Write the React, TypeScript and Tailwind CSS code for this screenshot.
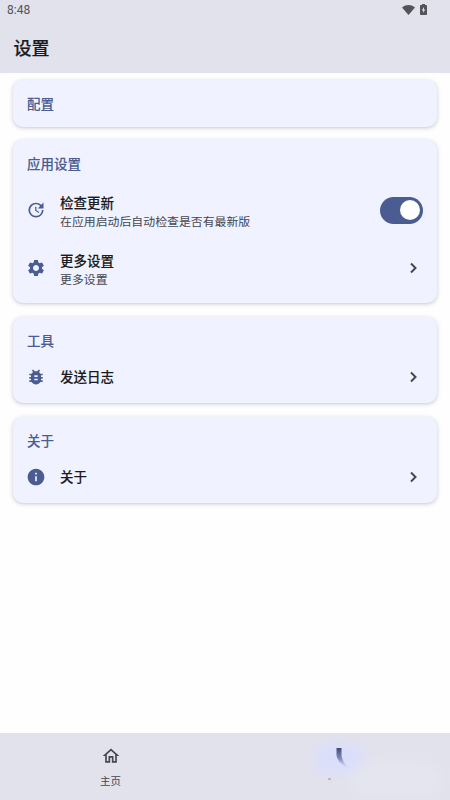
import type { ReactNode } from 'react';
import { MdBugReport, MdInfo, MdOutlineHome, MdSettings, MdUpdate } from 'react-icons/md';

type SectionProps = {
    title: string;
    className: string;
    children?: ReactNode;
};

const Section = ({ title, className, children }: SectionProps) => (
    <section className={`rounded-[10px] bg-[#f0f3ff] px-3.5 shadow-[0_1px_4px_1px_rgba(0,0,0,0.11),0_1px_2px_rgba(0,0,0,0.08)] ${className}`}>
        <h2 className="pt-[13px] text-[13.5px] leading-5 font-medium text-[#4a5c92] [-webkit-text-stroke:0.1px]">{title}</h2>
        {children}
    </section>
);

const Chevron = () => (
    <svg className="size-5" viewBox="0 0 20 20" fill="none" stroke="#45464f" strokeWidth="2">
        <path d="m8 5.500 4.500 4.500L8 14.500" />
    </svg>
);

type RowProps = {
    icon: ReactNode;
    title: string;
    subtitle?: string;
    className: string;
    action?: ReactNode;
};

const Row = ({ icon, title, subtitle, className, action }: RowProps) => (
    <div className={`flex items-center ${className}`}>
        <span className="-ml-[1px] w-[34px] text-[20px] text-[#4a5c92]">{icon}</span>
        <div className={subtitle ? 'flex-1 pt-[2px]' : 'flex-1 pb-[2px]'}>
            <div className="text-[13.5px] leading-5 font-medium text-[#1a1b21] [-webkit-text-stroke:0.12px]">{title}</div>
            {subtitle && <div className="text-[11.9px] leading-[18px] text-[#45464f]">{subtitle}</div>}
        </div>
        {action ?? <Chevron />}
    </div>
);

// Включённый переключатель
const Toggle = () => (
    <button className="flex h-[27px] w-[43px] items-center justify-end rounded-full bg-[#4a5c92] pr-[3px]">
        <span className="size-[20px] rounded-full bg-white" />
    </button>
);

const App = () => {
    return (
        <div className="flex h-[800px] w-[450px] flex-col overflow-hidden bg-[#fefefe] font-['Noto_Sans_CJK_SC',sans-serif]">
            <header className="h-[73px] bg-[#e2e2ec]">
                <div className="flex h-[19px] items-center justify-between pr-[23px] pl-[7px] text-[#52535b]">
                    <span className="pt-[2px] font-[Roboto,sans-serif] text-[12px] leading-[19px]">8:48</span>
                    <div className="flex items-center gap-[5px]">
                        <svg className="h-[10px] w-[13px]" viewBox="0 0 13 10" fill="currentColor">
                            <path d="M6.5 10 0 2.5C3.8-.8 9.200-.8 13 2.500Z" />
                        </svg>
                        <svg className="-mt-[1px] h-[11px] w-[7px]" viewBox="0 0 7 11" fill="currentColor">
                            <path fillRule="evenodd" d="M2 0H5V1H6.200Q7 1 7 1.800V10.200Q7 11 6.200 11H.8Q0 11 0 10.200V1.800Q0 1 .8 1H2ZM4 3 1.800 6.400H3.200V9L5.200 5.600H4Z" />
                        </svg>
                    </div>
                </div>
                <h1 className="px-[13.5px] pt-[14px] text-[18px] leading-7 font-medium text-[#1a1b21] [-webkit-text-stroke:0.2px]">设置</h1>
            </header>

            <main className="flex flex-1 flex-col px-[13px] pt-[7px]">
                <Section title="配置" className="mb-[13px] h-[47px]" />
                <Section title="应用设置" className="mb-[14px] h-[163px]">
                    <Row
                        icon={<MdUpdate />}
                        title="检查更新"
                        subtitle="在应用启动后自动检查是否有最新版"
                        className="mt-[18px] h-[38px]"
                        action={<Toggle />}
                    />
                    <Row icon={<MdSettings />} title="更多设置" subtitle="更多设置" className="mt-5 h-[38px]" />
                </Section>
                <Section title="工具" className="mb-[14px] h-[86px]">
                    <Row icon={<MdBugReport />} title="发送日志" className="mt-[17px] h-5" />
                </Section>
                <Section title="关于" className="h-[86px]">
                    <Row icon={<MdInfo />} title="关于" className="mt-[17px] h-5" />
                </Section>
            </main>

            <nav className="flex h-[67px] bg-[#e2e2ec]">
                <div className="flex w-[221px] flex-col items-center pt-[13px] text-[#45464f]">
                    <MdOutlineHome className="text-[20px]" />
                    <span className="mt-[6px] text-[10.500px] leading-[18px]">主页</span>
                </div>
                <div className="relative flex-1">
                    <div className="absolute top-[11px] left-[92px] h-[30px] w-[52px] rounded-full bg-[#d9deff] opacity-80 blur-[6px]" />
                    <div className="absolute top-[30px] left-[130px] h-[32px] w-[90px] rounded-full bg-[#e7e8f2] opacity-60 blur-[7px]" />
                    <svg className="absolute top-[15px] left-[105px] h-[36px] w-[26px] blur-[0.700px]" viewBox="0 0 26 36">
                        <defs>
                            <linearGradient id="stroke-fade" x1="0" y1="0" x2="0" y2="1">
                                <stop offset="0" stopColor="#3d477d" />
                                <stop offset="0.5" stopColor="#6a75a8" stopOpacity="0.8" />
                                <stop offset="1" stopColor="#b8c0e8" stopOpacity="0" />
                            </linearGradient>
                        </defs>
                        <path d="M10.500 0H15.500V8C16 12 19 16 23 21C17 18 11 13 10.500 7Z" fill="url(#stroke-fade)" />
                        <path d="M2 31H5" stroke="#92939d" strokeWidth="1" />
                    </svg>
                </div>
            </nav>
        </div>
    );
};

export default App;
